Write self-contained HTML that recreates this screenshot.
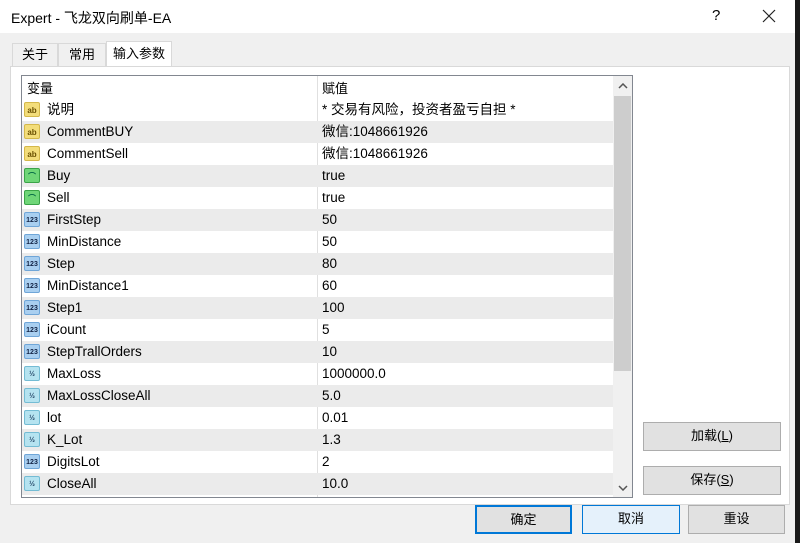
<!DOCTYPE html><html><head><style>
body{margin:0;width:800px;height:543px;overflow:hidden;background:#f0f0f0;font-family:"Liberation Sans","Noto Sans CJK SC",sans-serif;font-size:13px;color:#000;position:relative}
.a{position:absolute}
.row{position:absolute;left:22px;width:591px;height:22px;line-height:22px;font-size:13.5px}
.row.g{background:#ebebeb}
.ic{position:absolute;left:2px;top:3px;width:16px;height:15px;border-radius:2px;font-size:8px;line-height:15px;text-align:center;font-weight:bold}
.s{background:#f3dd7a;border:1px solid #d4b84a;color:#6a5000;box-sizing:border-box}
.b{background:#6fd678;border:1px solid #3aa348;color:#064;box-sizing:border-box}
.n{background:#a9cff0;border:1px solid #6fa6d8;color:#124;box-sizing:border-box;font-size:7px}
.d{background:#b5e3f0;border:1px solid #74bcd4;color:#246;box-sizing:border-box;font-size:7px}
.nm{position:absolute;left:25px}
.vl{position:absolute;left:300px}
.btn{position:absolute;background:#e1e1e1;border:1px solid #adadad;box-sizing:border-box;text-align:center;line-height:26px}
</style></head><body>
<div class="a" style="left:0;top:0;width:795px;height:33px;background:#fff"></div>
<div class="a" style="left:795px;top:0;width:5px;height:543px;background:#1a1a1a"></div>
<div class="a" style="left:11px;top:8px;font-size:14px">Expert - 飞龙双向刷单-EA</div>
<div class="a" style="left:712px;top:7px;font-size:15px">?</div>
<svg class="a" style="left:762px;top:9px" width="14" height="14"><path d="M1 1L13 13M13 1L1 13" stroke="#222" stroke-width="1.2"/></svg>
<div class="a" style="left:12px;top:43px;width:46px;height:23px;border:1px solid #d9d9d9;border-bottom:none;box-sizing:border-box;background:#f0f0f0;text-align:center;line-height:22px">关于</div>
<div class="a" style="left:58px;top:43px;width:48px;height:23px;border:1px solid #d9d9d9;border-bottom:none;box-sizing:border-box;background:#f0f0f0;text-align:center;line-height:22px">常用</div>
<div class="a" style="left:106px;top:41px;width:66px;height:26px;border:1px solid #d9d9d9;border-bottom:none;box-sizing:border-box;background:#fff;text-align:center;line-height:24px">输入参数</div>
<div class="a" style="left:10px;top:66px;width:780px;height:439px;background:#fff;border:1px solid #d9d9d9;box-sizing:border-box"></div>
<div class="a" style="left:21px;top:75px;width:612px;height:423px;border:1px solid #828790;box-sizing:border-box;background:#fff;overflow:hidden">
<div class="a" style="left:5px;top:2px;line-height:22px">变量</div>
<div class="a" style="left:300px;top:2px;line-height:22px">赋值</div>
<div class="a" style="left:295px;top:0;width:1px;height:423px;background:#e0e0e0"></div>
<div class="a" style="left:591px;top:0;width:19px;height:421px;background:#f0f0f0"></div>
<div class="a" style="left:592px;top:20px;width:17px;height:275px;background:#cdcdcd"></div>
<svg class="a" style="left:596px;top:7px" width="10" height="6"><path d="M1 5L5 1L9 5" stroke="#555" stroke-width="1.5" fill="none"/></svg>
<svg class="a" style="left:596px;top:409px" width="10" height="6"><path d="M1 1L5 5L9 1" stroke="#555" stroke-width="1.5" fill="none"/></svg>
</div>
<div class="row" style="top:99px"><div class="ic s">ab</div><span class="nm">说明</span><span class="vl">* 交易有风险，投资者盈亏自担 *</span></div>
<div class="row g" style="top:121px"><div class="ic s">ab</div><span class="nm">CommentBUY</span><span class="vl">微信:1048661926</span></div>
<div class="row" style="top:143px"><div class="ic s">ab</div><span class="nm">CommentSell</span><span class="vl">微信:1048661926</span></div>
<div class="row g" style="top:165px"><div class="ic b">⌒</div><span class="nm">Buy</span><span class="vl">true</span></div>
<div class="row" style="top:187px"><div class="ic b">⌒</div><span class="nm">Sell</span><span class="vl">true</span></div>
<div class="row g" style="top:209px"><div class="ic n">123</div><span class="nm">FirstStep</span><span class="vl">50</span></div>
<div class="row" style="top:231px"><div class="ic n">123</div><span class="nm">MinDistance</span><span class="vl">50</span></div>
<div class="row g" style="top:253px"><div class="ic n">123</div><span class="nm">Step</span><span class="vl">80</span></div>
<div class="row" style="top:275px"><div class="ic n">123</div><span class="nm">MinDistance1</span><span class="vl">60</span></div>
<div class="row g" style="top:297px"><div class="ic n">123</div><span class="nm">Step1</span><span class="vl">100</span></div>
<div class="row" style="top:319px"><div class="ic n">123</div><span class="nm">iCount</span><span class="vl">5</span></div>
<div class="row g" style="top:341px"><div class="ic n">123</div><span class="nm">StepTrallOrders</span><span class="vl">10</span></div>
<div class="row" style="top:363px"><div class="ic d">½</div><span class="nm">MaxLoss</span><span class="vl">1000000.0</span></div>
<div class="row g" style="top:385px"><div class="ic d">½</div><span class="nm">MaxLossCloseAll</span><span class="vl">5.0</span></div>
<div class="row" style="top:407px"><div class="ic d">½</div><span class="nm">lot</span><span class="vl">0.01</span></div>
<div class="row g" style="top:429px"><div class="ic d">½</div><span class="nm">K_Lot</span><span class="vl">1.3</span></div>
<div class="row" style="top:451px"><div class="ic n">123</div><span class="nm">DigitsLot</span><span class="vl">2</span></div>
<div class="row g" style="top:473px"><div class="ic d">½</div><span class="nm">CloseAll</span><span class="vl">10.0</span></div>
<div class="btn" style="left:643px;top:422px;width:138px;height:29px">加载(<u>L</u>)</div>
<div class="btn" style="left:643px;top:466px;width:138px;height:29px">保存(<u>S</u>)</div>
<div class="btn" style="left:475px;top:505px;width:97px;height:29px;border:2px solid #0078d7;line-height:25px">确定</div>
<div class="btn" style="left:582px;top:505px;width:98px;height:29px;background:#e5f1fb;border-color:#0078d7">取消</div>
<div class="btn" style="left:688px;top:505px;width:97px;height:29px">重设</div>
</body></html>
